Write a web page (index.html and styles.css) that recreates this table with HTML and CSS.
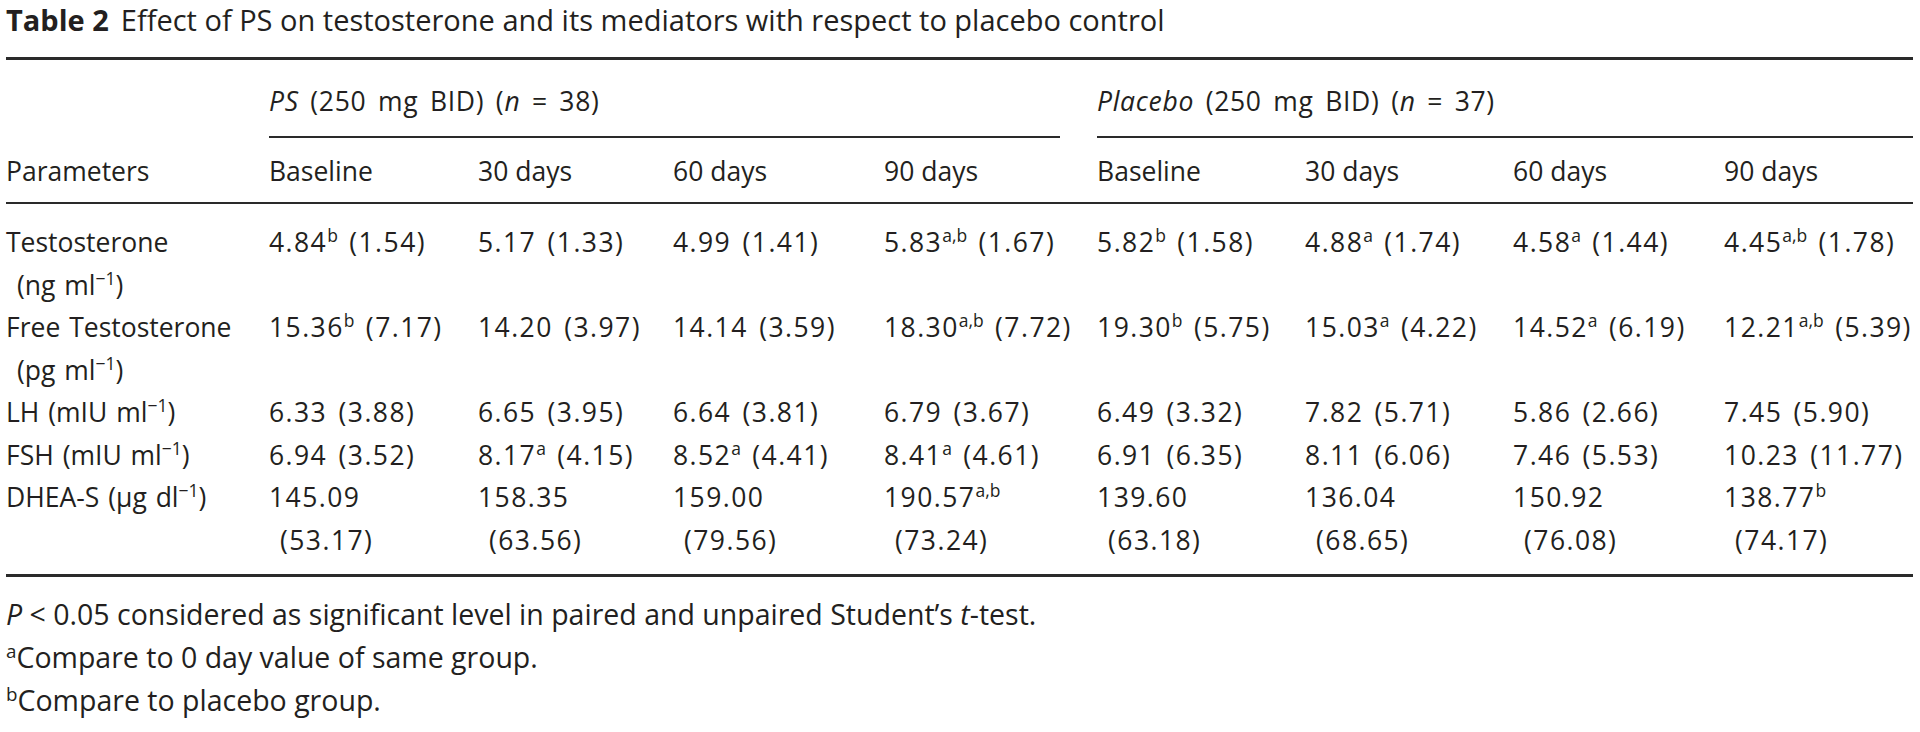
FILE: index.html
```html
<!DOCTYPE html>
<html lang="en">
<head>
<meta charset="utf-8">
<title>Table 2</title>
<link rel="stylesheet" href="styles.css">
</head>
<body>
<div class="page">
  <div class="caption"><b class="label">Table 2</b>Effect of PS on testosterone and its mediators with respect to placebo control</div>
  <table class="data">
    <colgroup>
      <col class="c-param">
      <col class="c1"><col class="c2"><col class="c3"><col class="c4">
      <col class="c5"><col class="c6"><col class="c7"><col class="c8">
    </colgroup>
    <thead>
      <tr class="group-row">
        <th></th>
        <th colspan="4"><div class="group group-ps"><i>PS</i> (250 mg BID) (<i>n</i> = 38)</div></th>
        <th colspan="4"><div class="group"><i>Placebo</i> (250 mg BID) (<i>n</i> = 37)</div></th>
      </tr>
      <tr class="head-row">
        <th>Parameters</th>
        <th>Baseline</th><th>30 days</th><th>60 days</th><th>90 days</th>
        <th>Baseline</th><th>30 days</th><th>60 days</th><th>90 days</th>
      </tr>
    </thead>
    <tbody>
      <tr class="first">
        <td class="label-cell"><span class="hang">Testosterone<br>(ng ml<sup>−1</sup>)</span></td>
        <td>4.84<sup>b</sup> (1.54)</td>
        <td>5.17 (1.33)</td>
        <td>4.99 (1.41)</td>
        <td>5.83<sup>a,b</sup> (1.67)</td>
        <td>5.82<sup>b</sup> (1.58)</td>
        <td>4.88<sup>a</sup> (1.74)</td>
        <td>4.58<sup>a</sup> (1.44)</td>
        <td>4.45<sup>a,b</sup> (1.78)</td>
      </tr>
      <tr>
        <td class="label-cell"><span class="hang">Free Testosterone<br>(pg ml<sup>−1</sup>)</span></td>
        <td>15.36<sup>b</sup> (7.17)</td>
        <td>14.20 (3.97)</td>
        <td>14.14 (3.59)</td>
        <td>18.30<sup>a,b</sup> (7.72)</td>
        <td>19.30<sup>b</sup> (5.75)</td>
        <td>15.03<sup>a</sup> (4.22)</td>
        <td>14.52<sup>a</sup> (6.19)</td>
        <td>12.21<sup>a,b</sup> (5.39)</td>
      </tr>
      <tr>
        <td class="label-cell">LH (mIU ml<sup>−1</sup>)</td>
        <td>6.33 (3.88)</td>
        <td>6.65 (3.95)</td>
        <td>6.64 (3.81)</td>
        <td>6.79 (3.67)</td>
        <td>6.49 (3.32)</td>
        <td>7.82 (5.71)</td>
        <td>5.86 (2.66)</td>
        <td>7.45 (5.90)</td>
      </tr>
      <tr>
        <td class="label-cell">FSH (mIU ml<sup>−1</sup>)</td>
        <td>6.94 (3.52)</td>
        <td>8.17<sup>a</sup> (4.15)</td>
        <td>8.52<sup>a</sup> (4.41)</td>
        <td>8.41<sup>a</sup> (4.61)</td>
        <td>6.91 (6.35)</td>
        <td>8.11 (6.06)</td>
        <td>7.46 (5.53)</td>
        <td>10.23 (11.77)</td>
      </tr>
      <tr class="last">
        <td class="label-cell">DHEA-S (μg dl<sup>−1</sup>)</td>
        <td><span class="hang">145.09<br>(53.17)</span></td>
        <td><span class="hang">158.35<br>(63.56)</span></td>
        <td><span class="hang">159.00<br>(79.56)</span></td>
        <td><span class="hang">190.57<sup>a,b</sup><br>(73.24)</span></td>
        <td><span class="hang">139.60<br>(63.18)</span></td>
        <td><span class="hang">136.04<br>(68.65)</span></td>
        <td><span class="hang">150.92<br>(76.08)</span></td>
        <td><span class="hang">138.77<sup>b</sup><br>(74.17)</span></td>
      </tr>
    </tbody>
  </table>
  <div class="notes">
    <p><i>P</i> &lt; 0.05 considered as significant level in paired and unpaired Student’s <i>t</i>-test.</p>
    <p><sup>a</sup>Compare to 0 day value of same group.</p>
    <p><sup>b</sup>Compare to placebo group.</p>
  </div>
</div>
</body>
</html>
```
FILE: styles.css
```css
html, body {
  margin: 0;
  padding: 0;
  background: #ffffff;
}

body {
  font-family: "Open Sans", "Noto Sans", "DejaVu Sans", sans-serif;
  font-size: 26.5px;
  color: #231f20;
}

.page {
  padding: 0 7px 0 6px;
}

.caption {
  font-size: 29px;
  line-height: 40px;
  margin-bottom: 17px;
  white-space: nowrap;
}

.caption .label {
  font-weight: 700;
  margin-right: 12px;
}

.data {
  width: 100%;
  border-collapse: collapse;
  border-top: 3px solid #2a2a2a;
  border-bottom: 3px solid #2a2a2a;
  table-layout: fixed;
}

.c-param { width: 263px; }
.c1 { width: 209px; }
.c2 { width: 195px; }
.c3 { width: 211px; }
.c4 { width: 213px; }
.c5 { width: 208px; }
.c6 { width: 208px; }
.c7 { width: 211px; }
.c8 { width: auto; }

.data th,
.data td {
  padding: 0;
  text-align: left;
  vertical-align: top;
  font-weight: 400;
  white-space: nowrap;
  line-height: 42.5px;
}

.data td {
  letter-spacing: 1.45px;
  word-spacing: 3px;
}

.data td.label-cell {
  letter-spacing: 0;
  word-spacing: 2px;
}

.group-row th {
  padding-top: 20px;
  letter-spacing: 0.7px;
  word-spacing: 4px;
}

.group {
  border-bottom: 2px solid #2a2a2a;
  padding-bottom: 13px;
}

.group-ps {
  margin-right: 37px;
}

.head-row th {
  padding-top: 12px;
  padding-bottom: 10px;
  border-bottom: 2px solid #2a2a2a;
}

tbody tr.first td {
  padding-top: 17px;
}

tbody tr.last td {
  padding-bottom: 13px;
}

.hang {
  display: block;
  padding-left: 11px;
  text-indent: -11px;
}

sup {
  font-size: 0.66em;
  line-height: 0;
  vertical-align: 0.55em;
  letter-spacing: 0;
}

.notes {
  margin-top: 16px;
  font-size: 28.5px;
}

.notes p {
  margin: 0;
  line-height: 43px;
}
```
